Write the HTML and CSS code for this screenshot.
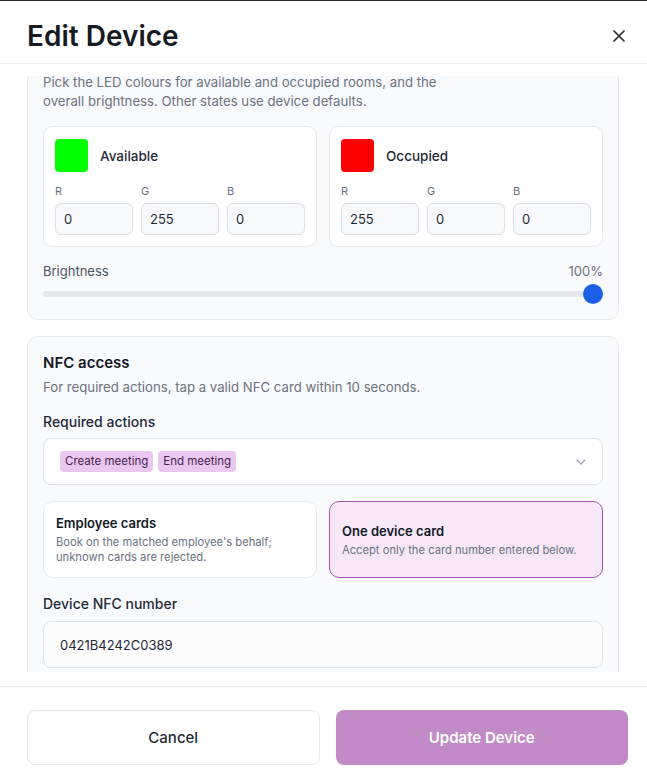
FILE: index.html
```html
<!DOCTYPE html>
<html lang="en">
<head>
  <meta charset="UTF-8" />
  <meta name="viewport" content="width=device-width, initial-scale=1" />
  <title>Edit Device</title>
  <link rel="stylesheet" href="styles.css">
</head>
<body>
  <div class="modal">
    <header class="modal-header">
      <h1>Edit Device</h1>
      <button class="close-btn" aria-label="Close">
        <svg width="12" height="12" viewBox="0 0 12 12"><path d="M1 1L11 11M11 1L1 11" stroke="#2a2a2e" stroke-width="1.7" stroke-linecap="round"/></svg>
      </button>
    </header>

    <div class="modal-body">
      <div class="modal-scroll">
        <div class="scroll-content">

          <section class="panel">
            <h2>LED colours</h2>
            <p class="panel-desc narrow">Pick the LED colours for available and occupied rooms, and the overall brightness. Other states use device defaults.</p>

            <div class="colour-grid">
              <div class="colour-card">
                <div class="colour-head">
                  <span class="swatch green"></span>
                  <span class="colour-name">Available</span>
                </div>
                <div class="rgb-row">
                  <label class="rgb-field"><span>R</span><input type="text" value="0"></label>
                  <label class="rgb-field"><span>G</span><input type="text" value="255"></label>
                  <label class="rgb-field"><span>B</span><input type="text" value="0"></label>
                </div>
              </div>

              <div class="colour-card">
                <div class="colour-head">
                  <span class="swatch red"></span>
                  <span class="colour-name">Occupied</span>
                </div>
                <div class="rgb-row">
                  <label class="rgb-field"><span>R</span><input type="text" value="255"></label>
                  <label class="rgb-field"><span>G</span><input type="text" value="0"></label>
                  <label class="rgb-field"><span>B</span><input type="text" value="0"></label>
                </div>
              </div>
            </div>

            <div class="brightness-head">
              <span>Brightness</span>
              <span class="brightness-value">100%</span>
            </div>
            <input class="slider" type="range" min="0" max="100" value="100">
          </section>

          <section class="panel">
            <h2>NFC access</h2>
            <p class="panel-desc">For required actions, tap a valid NFC card within 10 seconds.</p>

            <div class="field-label">Required actions</div>
            <div class="multi-select">
              <div class="chips">
                <span class="chip">Create meeting</span>
                <span class="chip">End meeting</span>
              </div>
              <svg class="chevron" width="10" height="6" viewBox="0 0 10 6"><path d="M1 1L5 5L9 1" fill="none" stroke="#9ca3af" stroke-width="1.2" stroke-linecap="round" stroke-linejoin="round"/></svg>
            </div>

            <div class="mode-grid">
              <div class="mode-card">
                <div class="mode-title">Employee cards</div>
                <div class="mode-desc">Book on the matched employee's behalf; unknown cards are rejected.</div>
              </div>
              <div class="mode-card selected">
                <div class="mode-title">One device card</div>
                <div class="mode-desc">Accept only the card number entered below.</div>
              </div>
            </div>

            <div class="field-label">Device NFC number</div>
            <input class="text-input" type="text" value="0421B4242C0389">
          </section>

        </div>
      </div>
    </div>

    <footer class="modal-footer">
      <button class="btn btn-cancel">Cancel</button>
      <button class="btn btn-primary">Update Device</button>
    </footer>
  </div>
</body>
</html>
```

FILE: styles.css
```css
:root {
  --text: #111827;
  --text-2: #1f2937;
  --muted: #6b7280;
  --border: #e5e7eb;
  --panel-bg: #f9fafb;
  --accent: #c08bc7;
}

* {
  box-sizing: border-box;
}

body {
  margin: 0;
  padding: 0;
  border-top: 1px solid #27272a;
  background: #fff;
  color: var(--text);
  font-family: Inter, "Noto Sans", sans-serif;
}

.modal {
  height: calc(100vh - 1px);
  display: flex;
  flex-direction: column;
}

/* header */
.modal-header {
  height: 63px;
  padding: 19px 22px 0 27px;
  display: flex;
  justify-content: space-between;
  align-items: flex-start;
  border-bottom: 1px solid #eceef1;
}

.modal-header h1 {
  margin: 0;
  font-size: 28px;
  line-height: 32px;
  font-weight: 600;
  color: #151a23;
}

.close-btn {
  margin-top: 10px;
  padding: 0;
  border: none;
  background: none;
  cursor: pointer;
  display: flex;
}

/* scrolling body */
.modal-body {
  flex: 1;
  min-height: 0;
  padding: 12px 28px 14px 27px;
  display: flex;
}

.modal-scroll {
  flex: 1;
  overflow: hidden;
}

.scroll-content {
  margin-top: -45px;
  display: flex;
  flex-direction: column;
  gap: 16px;
}

.panel {
  background: var(--panel-bg);
  border: 1px solid #e8eaee;
  border-radius: 10px;
  padding: 15px;
}

.panel h2 {
  margin: 0;
  font-size: 15px;
  line-height: 22px;
  font-weight: 600;
  color: var(--text);
}

.panel-desc {
  margin: 4px 0 0;
  font-size: 13.2px;
  line-height: 19px;
  color: var(--muted);
}

.panel-desc.narrow {
  max-width: 420px;
}

/* LED colours */
.colour-grid {
  margin-top: 15px;
  display: grid;
  grid-template-columns: 1fr 1fr;
  gap: 12px;
}

.colour-card {
  background: #fff;
  border: 1px solid #e8eaee;
  border-radius: 9px;
  padding: 12px 11px 11px;
}

.colour-head {
  display: flex;
  align-items: center;
  gap: 12px;
}

.swatch {
  width: 33px;
  height: 33px;
  border-radius: 4px;
}

.swatch.green { background: #00ff00; }
.swatch.red { background: #ff0000; }

.colour-name {
  font-size: 13.5px;
  font-weight: 500;
  color: var(--text-2);
}

.rgb-row {
  margin-top: 12px;
  display: grid;
  grid-template-columns: repeat(3, 1fr);
  gap: 8px;
}

.rgb-field span {
  display: block;
  font-size: 11px;
  line-height: 14px;
  color: var(--muted);
  margin-bottom: 5px;
}

.rgb-field input {
  width: 100%;
  height: 32px;
  padding: 0 8px;
  border: 1px solid #dcdfe4;
  border-radius: 6px;
  background: #f8f9fa;
  font-family: inherit;
  font-size: 13px;
  color: var(--text-2);
}

.brightness-head {
  margin-top: 15px;
  display: flex;
  justify-content: space-between;
  font-size: 13px;
  line-height: 18px;
  color: #4b5563;
}

.brightness-value {
  color: var(--muted);
}

.slider {
  -webkit-appearance: none;
  appearance: none;
  display: block;
  width: 100%;
  height: 20px;
  margin: 4px 0 0;
  background: transparent;
}

.slider::-webkit-slider-runnable-track {
  height: 6px;
  border-radius: 3px;
  background: #e5e7eb;
}

.slider::-webkit-slider-thumb {
  -webkit-appearance: none;
  width: 20px;
  height: 20px;
  margin-top: -7px;
  border-radius: 50%;
  background: #1d5fe6;
  border: none;
}

/* NFC */
.field-label {
  margin-top: 15px;
  font-size: 14px;
  line-height: 20px;
  font-weight: 500;
  color: var(--text-2);
}

.mode-grid + .field-label {
  margin-top: 16px;
}

.multi-select {
  margin-top: 6px;
  height: 47px;
  padding: 0 16px;
  background: #fff;
  border: 1px solid #dfe2e6;
  border-radius: 8px;
  display: flex;
  align-items: center;
  justify-content: space-between;
}

.chips {
  display: flex;
  gap: 5px;
}

.chip {
  height: 21px;
  padding: 0 5px;
  border-radius: 4px;
  background: #e9c7ef;
  color: #4a2453;
  font-size: 11.5px;
  line-height: 21px;
}

.mode-grid {
  margin-top: 16px;
  display: grid;
  grid-template-columns: 1fr 1fr;
  gap: 12px;
}

.mode-card {
  height: 77px;
  padding: 0 12px;
  background: #fff;
  border: 1px solid #e8eaee;
  border-radius: 10px;
  display: flex;
  flex-direction: column;
  justify-content: center;
}

.mode-card.selected {
  background: #f7e7f8;
  border: 1.5px solid #a256ad;
}

.mode-title {
  font-size: 13px;
  line-height: 18px;
  font-weight: 600;
  color: var(--text);
}

.mode-desc {
  margin-top: 3px;
  font-size: 11.2px;
  line-height: 15px;
  color: var(--muted);
}

.text-input {
  display: block;
  width: 100%;
  height: 47px;
  margin-top: 7px;
  padding: 0 16px;
  background: #fcfcfd;
  border: 1px solid #dfe2e6;
  border-radius: 8px;
  font-family: inherit;
  font-size: 13px;
  color: var(--text-2);
}

/* footer */
.modal-footer {
  border-top: 1px solid #eceef1;
  padding: 23px 19px 11px 27px;
  display: grid;
  grid-template-columns: 1fr 1fr;
  gap: 16px;
}

.btn {
  height: 55px;
  border-radius: 8px;
  font-family: inherit;
  font-size: 15px;
  cursor: pointer;
}

.btn-cancel {
  background: #fff;
  border: 1px solid #e5e7eb;
  color: var(--text-2);
  font-weight: 500;
}

.btn-primary {
  background: var(--accent);
  border: none;
  color: #fff;
  font-weight: 600;
}
```
